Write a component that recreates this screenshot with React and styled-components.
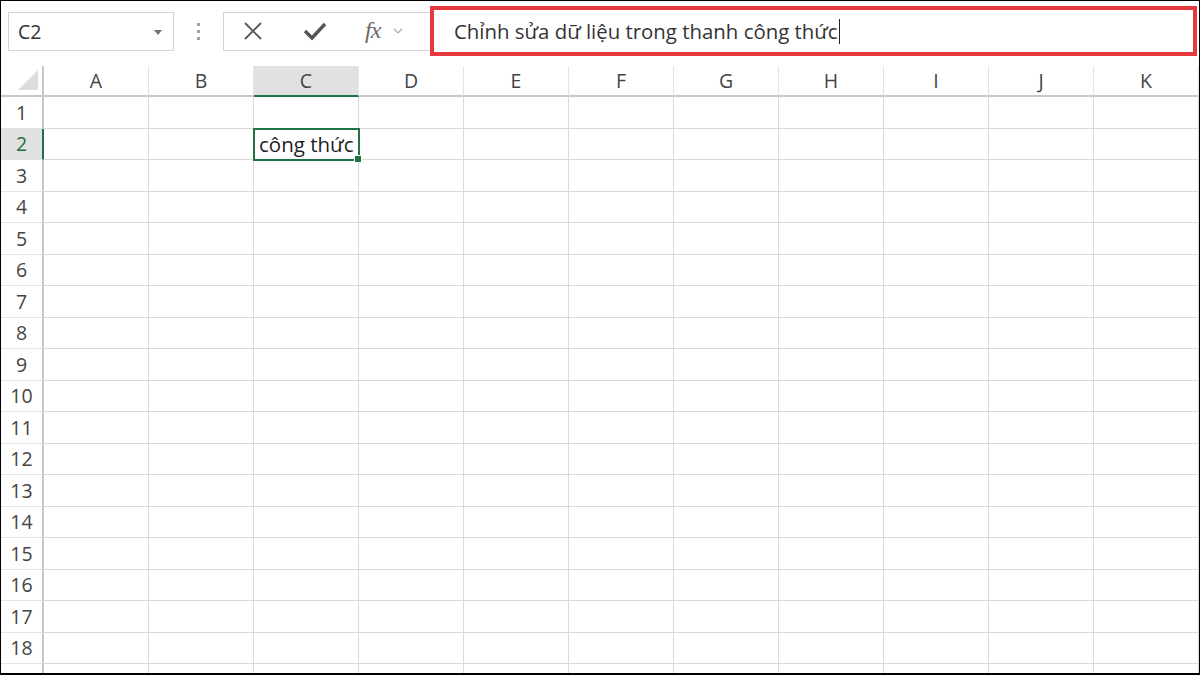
import React from "react";
import styled, { createGlobalStyle } from "styled-components";

const GlobalStyle = createGlobalStyle`
  * { box-sizing: border-box; }
  html, body { margin: 0; padding: 0; background: #fff; }
  body { font-family: "Open Sans", "Noto Sans", sans-serif; }
`;

const columns = ["A", "B", "C", "D", "E", "F", "G", "H", "I", "J", "K"];
const rows = Array.from({ length: 19 }, (_, i) => i + 1);
const GREEN = "#217346";

function App() {
  return (
    <>
      <GlobalStyle />
      <Frame>
        <Toolbar>
          <NameBox>
            <span>C2</span>
            <DropArrow />
          </NameBox>
          <Grip>
            <i />
            <i />
            <i />
          </Grip>
          <ButtonGroup>
            <IconButton>
              <svg width="20" height="20" viewBox="0 0 20 20">
                <path d="M2 2 L18 18 M18 2 L2 18" stroke="#555" strokeWidth="1.8" fill="none" />
              </svg>
            </IconButton>
            <IconButton>
              <svg width="24" height="20" viewBox="0 0 24 20">
                <path d="M2 10 L9 17 L22 3" stroke="#555" strokeWidth="3.4" fill="none" />
              </svg>
            </IconButton>
            <Fx>fx</Fx>
            <svg width="10" height="8" viewBox="0 0 10 8">
              <path d="M1 2 L5 6 L9 2" stroke="#aaa" strokeWidth="1.2" fill="none" />
            </svg>
          </ButtonGroup>
          <FormulaInput>
            Chỉnh sửa dữ liệu trong thanh công thức
            <Caret />
          </FormulaInput>
        </Toolbar>

        <Sheet>
          <Row>
            <Corner>
              <Triangle />
            </Corner>
            {columns.map((c) => (
              <ColHeader key={c} $active={c === "C"}>
                {c}
              </ColHeader>
            ))}
          </Row>
          {rows.map((r) => (
            <Row key={r}>
              <RowHeader $active={r === 2}>{r}</RowHeader>
              {columns.map((c) => {
                const selected = r === 2 && c === "C";
                return (
                  <Cell key={c} $selected={selected}>
                    {selected && "công thức"}
                  </Cell>
                );
              })}
            </Row>
          ))}
        </Sheet>
      </Frame>
    </>
  );
}

const Frame = styled.div`
  width: 1200px;
  height: 675px;
  border: 1px solid #000;
  border-bottom-width: 2px;
  overflow: hidden;
  background: #fff;
  display: flex;
  flex-direction: column;
`;

const Toolbar = styled.div`
  height: 65px;
  flex-shrink: 0;
  display: flex;
  align-items: center;
  padding: 0 2px 5px 7px;
`;

const NameBox = styled.div`
  width: 166px;
  height: 39px;
  border: 1px solid #d4d4d4;
  display: flex;
  align-items: center;
  justify-content: space-between;
  padding: 0 11px 0 9px;
  font-size: 19.5px;
  color: #333;
`;

const DropArrow = styled.div`
  width: 0;
  height: 0;
  border-left: 4.5px solid transparent;
  border-right: 4.5px solid transparent;
  border-top: 5px solid #707070;
  margin-top: 2px;
`;

const Grip = styled.div`
  width: 49px;
  display: flex;
  flex-direction: column;
  align-items: center;
  gap: 4px;
  i {
    width: 3px;
    height: 3px;
    background: #a0a0a0;
  }
`;

const ButtonGroup = styled.div`
  width: 207px;
  height: 39px;
  border: 1px solid #d4d4d4;
  border-right: none;
  display: flex;
  align-items: center;
  padding-left: 18px;
`;

const IconButton = styled.div`
  width: 60px;
  display: flex;
  align-items: center;
  padding-left: 1px;
`;

const Fx = styled.span`
  font-family: "Liberation Serif", "DejaVu Serif", serif;
  font-style: italic;
  font-size: 24px;
  color: #6a6a6a;
  width: 28px;
  margin-left: 3px;
  letter-spacing: -1px;
  line-height: 1;
  margin-top: -2px;
`;

const FormulaInput = styled.div`
  flex: 1;
  height: 50px;
  border: 4px solid #e6393e;
  display: flex;
  align-items: center;
  padding-left: 20px;
  font-size: 20.4px;
  color: #333;
  white-space: nowrap;
`;

const Caret = styled.span`
  width: 1px;
  height: 25px;
  background: #222;
  margin-left: 1px;
`;

const Sheet = styled.div`
  flex: 1;
  overflow: hidden;
`;

const Row = styled.div`
  display: grid;
  grid-template-columns: 43px repeat(11, 105px);
  height: 31.5px;
  &:first-child {
    height: 31px;
  }
`;

const Corner = styled.div`
  display: flex;
  justify-content: flex-end;
  align-items: flex-end;
  padding: 0 4px 5px 0;
  border-right: 2px solid #c8c8c8;
  border-bottom: 2px solid #c8c8c8;
`;

const Triangle = styled.div`
  width: 0;
  height: 0;
  border-left: 20px solid transparent;
  border-bottom: 20px solid #dcdcdc;
`;

const ColHeader = styled.div`
  display: flex;
  align-items: center;
  justify-content: center;
  font-size: 19.5px;
  color: #444;
  background: ${(p) => (p.$active ? "#e1e1e1" : "#fff")};
  border-right: 1px solid #e3e3e3;
  border-bottom: 2px solid ${(p) => (p.$active ? GREEN : "#c8c8c8")};
`;

const RowHeader = styled.div`
  display: flex;
  align-items: center;
  justify-content: center;
  font-size: 19.5px;
  color: ${(p) => (p.$active ? GREEN : "#444")};
  background: ${(p) => (p.$active ? "#e1e1e1" : "#fff")};
  border-right: 2px solid ${(p) => (p.$active ? GREEN : "#c8c8c8")};
  border-bottom: 1px solid #e3e3e3;
`;

const Cell = styled.div`
  position: relative;
  border-right: 1px solid #dadada;
  border-bottom: 1px solid #dadada;
  display: flex;
  align-items: center;
  padding-left: 5px;
  font-size: 20.5px;
  color: #1e1e1e;
  white-space: nowrap;
  ${(p) =>
    p.$selected &&
    `
    outline: 2px solid ${GREEN};
    outline-offset: -1px;
    z-index: 1;
    &::after {
      content: "";
      position: absolute;
      right: -4px;
      bottom: -4px;
      width: 6px;
      height: 6px;
      background: ${GREEN};
      border: 1px solid #fff;
    }
  `}
`;

export default App;
